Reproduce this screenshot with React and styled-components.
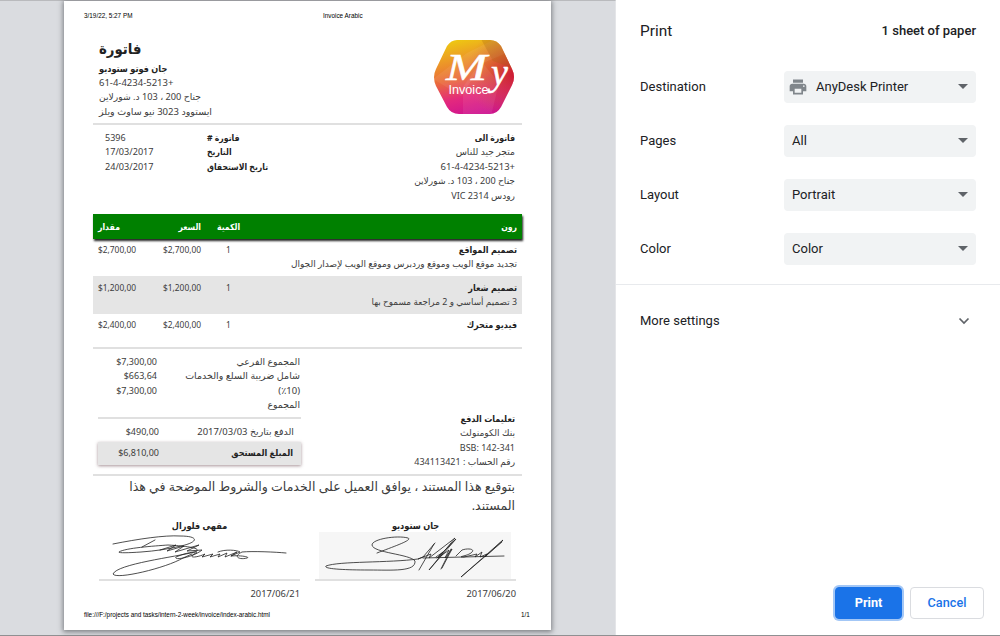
import React from "react";
import styled, { createGlobalStyle } from "styled-components";

const Global = createGlobalStyle`
  * { box-sizing: border-box; }
  html, body { margin: 0; padding: 0; }
  body { font-family: Roboto, "Liberation Sans", sans-serif; font-size: 13px; color: #202124; overflow: hidden; }
`;

const Dialog = styled.div`
  display: flex;
  width: 1000px;
  height: 636px;
  background: #fff;
  border-bottom: 1px solid #8f9092;
`;

const Preview = styled.main`
  width: 616px;
  height: 635px;
  padding: 0 0 0 64px;
  background: #dadce0;
  border-top: 1px solid #b9babd;
  border-right: 1px solid #e4e5e8;
`;

const Sheet = styled.article`
  width: 487px;
  height: 629px;
  display: flex;
  flex-direction: column;
  background: #fff;
  box-shadow: 0 1px 5px 1px rgba(60, 64, 67, 0.6);
  font-family: "Noto Sans", "DejaVu Sans", sans-serif;
  color: #3c3c3c;
`;

const PageMeta = styled.div`
  display: grid;
  grid-template-columns: ${(p) => p.$columns};
  height: ${(p) => p.$height}px;
  padding: ${(p) => p.$top}px 21px 0 20px;
  font: 6.37px/10px "Liberation Sans", sans-serif;
  color: #000;
`;

const Rule = styled.div`
  flex: none;
  height: 2px;
  margin: 0 ${(p) => p.$inset ?? 29}px;
  background: #e0e0e0;
`;

const Line = styled.div`
  height: ${(p) => p.$h ?? 14.4}px;
  line-height: ${(p) => p.$h ?? 14.4}px;
  font-family: "Noto Sans", ${(p) => (p.$bold ? '"DejaVu Sans Condensed", ' : "")}"DejaVu Sans", sans-serif;
  font-size: ${(p) => p.$size ?? 9}px;
  font-weight: ${(p) => (p.$bold ? 700 : 400)};
  color: ${(p) => (p.$bold ? "#222" : "inherit")};
  text-align: ${(p) => p.$align ?? "right"};
  white-space: nowrap;
`;

const Masthead = styled.header`
  display: flex;
  justify-content: space-between;
  height: 97px;
  padding: 11px 36px 0 35px;
`;

const Logo = styled.svg`
  width: 82px;
  height: 77px;
  margin-top: 2px;
`;

const Info = styled.section`
  display: grid;
  grid-template-columns: 102px 120px 1fr;
  height: 89px;
  padding: 6px 36px 0 41px;
`;

const Table = styled.section`
  margin: 0 29px;
  height: 133px;
`;

const Row = styled.div`
  display: grid;
  grid-template-columns: 43px 60px 55px 1fr;
  height: ${(p) => p.$height}px;
  padding: ${(p) => p.$top}px 5px 0 5px;
  background: ${(p) => (p.$shaded ? "#e5e5e5" : "transparent")};
`;

const HeadRow = styled(Row)`
  background: #008000;
  box-shadow: 1px 2px 2px #222;
  color: #fff;
  ${Line} { color: #fff; }
`;

const Summary = styled.section`
  display: flex;
  justify-content: space-between;
  height: 125px;
  padding: 0 36px 0 34px;
`;

const Totals = styled.div`
  width: 203px;
  padding-top: 6px;
`;

const Total = styled.div`
  display: grid;
  grid-template-columns: ${(p) => p.$left ?? 59}px 1fr;
  height: ${(p) => p.$height ?? 14.4}px;
  padding-right: ${(p) => p.$right ?? 1}px;
`;

const AmountDue = styled(Total)`
  padding-top: 4px;
  background: #e5e5e5;
  box-shadow: 0 1px 3px rgba(80, 40, 50, 0.5);
`;

const Payment = styled.div`
  padding-top: 63px;
`;

const Terms = styled.section`
  height: 43px;
  padding: 1px 36px 0 0;
`;

const Signatures = styled.section`
  display: grid;
  grid-template-columns: 201px 201px;
  column-gap: 15px;
  padding-left: 35px;
  height: 82px;
`;

const Scribble = styled.svg`
  display: block;
  width: 192px;
  height: 47px;
  margin-left: 4px;
  background: ${(p) => (p.$paper ? "#f6f6f6" : "transparent")};
  fill: none;
  stroke: #222;
  stroke-width: 0.8;
  stroke-linecap: round;
`;

const Panel = styled.aside`
  flex: 1;
  display: flex;
  flex-direction: column;
`;

const PanelHead = styled.div`
  display: flex;
  align-items: center;
  justify-content: space-between;
  height: 60px;
  padding: 2px 24px 0;
  h1 { margin: 0; font-size: 15.4px; font-weight: 400; }
  span { margin-bottom: 2px; font-weight: 500; }
`;

const Settings = styled.div`
  display: flex;
  flex-direction: column;
  height: 225px;
  border-bottom: 1px solid #e8eaed;
`;

const Setting = styled.label`
  display: grid;
  grid-template-columns: 144px 192px;
  align-items: center;
  height: 54px;
  padding: 0 24px;
  > span { margin-bottom: 2px; }
`;

const Select = styled.div`
  display: flex;
  align-items: center;
  height: 32px;
  padding: 0 8px 2px ${(p) => (p.$icon ? 4 : 8)}px;
  background: #f1f3f4;
  border-radius: 4px;
  span { flex: 1; }
`;

const PrinterIcon = styled.svg`
  width: 20px;
  height: 20px;
  margin: 1px 8px 0 0;
  fill: #80868b;
`;

const Arrow = styled.svg`
  width: 10px;
  height: 5px;
  fill: #5f6368;
`;

const More = styled.div`
  display: flex;
  align-items: center;
  justify-content: space-between;
  height: 72px;
  padding: 0 30px 0 24px;
  span { margin-bottom: 2px; }
`;

const Actions = styled.footer`
  display: flex;
  justify-content: flex-end;
  gap: 8px;
  margin-top: auto;
  padding: 0 16px 16px 0;
`;

const Button = styled.button`
  width: ${(p) => (p.$primary ? 67 : 74)}px;
  height: 32px;
  padding: 0 0 2px;
  border: 1px solid ${(p) => (p.$primary ? "#1a73e8" : "#dadce0")};
  border-radius: 4px;
  background: ${(p) => (p.$primary ? "#1a73e8" : "#fff")};
  color: ${(p) => (p.$primary ? "#fff" : "#1a73e8")};
  box-shadow: ${(p) => (p.$primary ? "0 0 0 2px #a3c7f6" : "none")};
  font: ${(p) => (p.$primary ? 700 : 500)} 12.7px Roboto, sans-serif;
`;

function InvoiceLogo() {
  return (
    <Logo viewBox="0 0 82 77">
      <defs>
        <linearGradient id="base" x1="0.25" y1="0" x2="0.5" y2="1">
          <stop offset="0" stopColor="#eecb10" />
          <stop offset="0.5" stopColor="#ea6a3c" />
          <stop offset="0.75" stopColor="#e3287e" />
          <stop offset="1" stopColor="#cd1290" />
        </linearGradient>
        <radialGradient id="side" cx="1" cy="0.45" r="0.6">
          <stop offset="0" stopColor="#c8102e" stopOpacity="0.9" />
          <stop offset="1" stopColor="#c8602e" stopOpacity="0" />
        </radialGradient>
        <clipPath id="hex">
          <path d="M24 1H57Q64 1 68 7L79 30Q83 38 79 46L68 68Q64 75 57 75H26Q18 75 14 68L3 47Q-1 38 3 30L14 7Q18 1 24 1Z" />
        </clipPath>
      </defs>
      <g clipPath="url(#hex)">
        <path d="M0 0H82V77H0Z" fill="url(#base)" />
        <path d="M0 0H82V77H0Z" fill="url(#side)" />
        <path d="M0 40L34 14 62 0 78 12 50 24 28 57Z" fill="#fff" opacity="0.07" />
        <path d="M30 77V48L48 22 66 44 58 77Z" fill="#fff" opacity="0.07" />
        <path d="M48 0H82V30L60 22Z" fill="#a06010" opacity="0.25" />
      </g>
      <g fill="#fff">
        <text x="13" y="41" fontFamily="Liberation Serif, serif" fontStyle="italic" fontSize="37" stroke="#fff" strokeWidth="0.5" textLength="41" lengthAdjust="spacingAndGlyphs">M</text>
        <text x="58" y="46" fontFamily="Liberation Serif, serif" fontStyle="italic" fontSize="38" stroke="#fff" strokeWidth="0.5">y</text>
        <text x="15.5" y="54.5" fontFamily="Liberation Sans, sans-serif" fontSize="12" textLength="40" lengthAdjust="spacingAndGlyphs">Invoice</text>
      </g>
    </Logo>
  );
}

const DropArrow = () => (
  <Arrow viewBox="0 0 10 5"><path d="M0 0H10L5 5Z" /></Arrow>
);

const settings = [
  { label: "Destination", value: "AnyDesk Printer", icon: true },
  { label: "Pages", value: "All" },
  { label: "Layout", value: "Portrait" },
  { label: "Color", value: "Color" },
];

export default function App() {
  return (
    <>
      <Global />
      <Dialog>
        <Preview>
          <Sheet>
            <PageMeta $columns="239px 1fr" $height={25} $top={10}>
              <span>3/19/22, 5:27 PM</span>
              <span>Invoice Arabic</span>
            </PageMeta>
            <Masthead>
              <div dir="rtl">
                <Line $align="left" $h={22} $size={14.8} $bold>فاتورة</Line>
                <Line $align="left" $h={19} $size={9.1} $bold>جان فوتو ستوديو</Line>
                <Line $align="left" $h={10} $size={9.5}>+61-4-4234-5213</Line>
                <Line $align="left" $h={18} $size={9.2}>جناح 200 ، 103 د. شورلاين</Line>
                <Line $align="left" $h={12} $size={9.55}>ايستوود 3023 نيو ساوث ويلز</Line>
              </div>
              <InvoiceLogo />
            </Masthead>
            <Rule />
            <Info>
              <div>
                <Line $align="left">5396</Line>
                <Line $align="left" $size={9.15}>17/03/2017</Line>
                <Line $align="left" $size={9.15}>24/03/2017</Line>
              </div>
              <div dir="rtl">
                <Line $align="left" $size={8.6} $bold>فاتورة #</Line>
                <Line $align="left" $size={8.6} $bold>التاريخ</Line>
                <Line $align="left" $size={8.6} $bold>تاريخ الاستحقاق</Line>
              </div>
              <div dir="rtl">
                <Line $size={8.6} $bold>فاتورة الى</Line>
                <Line $size={9.2}>متجر جيد للناس</Line>
                <Line $size={9.5}>+61-4-4234-5213</Line>
                <Line $size={9.1}>جناح 200 ، 103 د. شورلاين</Line>
                <Line $size={9.1}>رودس VIC 2314</Line>
              </div>
            </Info>
            <Table>
              <HeadRow $height={25} $top={6}>
                <Line $align="left" $size={8.6} $bold>مقدار</Line>
                <Line $size={8.6} $bold>السعر</Line>
                <Line $align="center" $size={8.6} $bold>الكمية</Line>
                <Line $size={8.6} $bold>رون</Line>
              </HeadRow>
              <Row $height={37} $top={4}>
                <Line $align="left" $size={8.4}>$2,700,00</Line>
                <Line $size={8.4}>$2,700,00</Line>
                <Line $align="center" $size={8.4}>1</Line>
                <div dir="rtl">
                  <Line $size={9} $bold>تصميم المواقع</Line>
                  <Line $h={13}>تجديد موقع الويب وموقع وردبرس وموقع الويب لإصدار الجوال</Line>
                </div>
              </Row>
              <Row $height={38} $top={5} $shaded>
                <Line $align="left" $size={8.4}>$1,200,00</Line>
                <Line $size={8.4}>$1,200,00</Line>
                <Line $align="center" $size={8.4}>1</Line>
                <div dir="rtl">
                  <Line $bold>تصميم شعار</Line>
                  <Line $size={8.85}>3 تصميم أساسي و 2 مراجعة مسموح بها</Line>
                </div>
              </Row>
              <Row $height={33} $top={4}>
                <Line $align="left" $size={8.4}>$2,400,00</Line>
                <Line $size={8.4}>$2,400,00</Line>
                <Line $align="center" $size={8.4}>1</Line>
                <Line $bold dir="rtl">فيديو متحرك</Line>
              </Row>
            </Table>
            <Rule />
            <Summary>
              <Totals>
                <Total><Line>$7,300,00</Line><Line $size={9.3}>المجموع الفرعي</Line></Total>
                <Total><Line>$663,64</Line><Line $size={9.5}>شامل ضريبة السلع والخدمات</Line></Total>
                <Total><Line>$7,300,00</Line><Line $size={9.5}>(٪10)</Line></Total>
                <Total $height={18.8}><span /><Line $size={9.3}>المجموع</Line></Total>
                <Rule $inset={0} />
                <Total $left={61} $height={23} $right={7}>
                  <Line $h={25}>$490,00</Line>
                  <Line $h={25} $size={9.45} dir="rtl">الدفع بتاريخ 2017/03/03</Line>
                </Total>
                <AmountDue $left={61} $height={23} $right={8}>
                  <Line>$6,810,00</Line>
                  <Line $bold>المبلغ المستحق</Line>
                </AmountDue>
              </Totals>
              <Payment dir="rtl">
                <Line $bold>تعليمات الدفع</Line>
                <Line $size={9.2}>بنك الكومنولث</Line>
                <Line>BSB: 142-341</Line>
                <Line>رقم الحساب : 434113421</Line>
              </Payment>
            </Summary>
            <Rule />
            <Terms dir="rtl">
              <Line $h={19} $size={12.55}>بتوقيع هذا المستند ، يوافق العميل على الخدمات والشروط الموضحة في هذا</Line>
              <Line $h={19} $size={12.55}>المستند.</Line>
            </Terms>
            <Signatures>
              <div>
                <Line $align="center" $h={13} $size={9.1} $bold>مقهى فلورال</Line>
                <Scribble viewBox="0 0 192 47">
                  <path d="M10 12C35 7 62 3 77 4C96 4 96 10 78 14C66 17 52 19 38 20C24 21 15 21 16 20C22 16 51 14 65 13C82 14 101 16 92 20C72 25 14 32 10 42C13 48 63 36 80 26L89 22" />
                  <path d="M39 15L52 8M57 18L73 13 64 19 81 14 72 20 96 13 84 19 99 18C91 25 70 29 73 25C84 20 101 18 91 22C85 26 93 26 102 22L99 25 110 22 107 25 117 22 115 25 124 21 122 25 134 20 128 24" />
                  <path d="M115 20C122 17 134 18 137 20L128 24C136 23 148 25 144 26C137 28 129 25 139 20C150 19 172 20 183 21" />
                </Scribble>
                <Rule $inset={0} />
                <Line $h={26} $size={9.3}>2017/06/21</Line>
              </div>
              <div>
                <Line $align="center" $h={13} $size={9.1} $bold>جان ستوديو</Line>
                <Scribble viewBox="0 0 192 47" $paper>
                  <path d="M58 21C76 14 94 8 89 6C78 3 53 7 53 13C54 21 91 22 96 29C97 40 73 38 50 38C26 38 4 37 7 34C20 29 70 31 99 27" />
                  <path d="M115 12L100 38M116 11L104 25 99 27 112 22 110 26 136 6 110 38 137 7 118 26M117 25L124 20 119 26 130 18 126 26 133 17 123 36M132 17L122 37" />
                  <path d="M137 24L143 18C149 16 156 17 153 20C150 24 136 25 145 25L158 22 156 25 163 20 161 25 168 22 166 25 184 8 142 45 183 10M104 26L185 24" />
                </Scribble>
                <Rule $inset={0} />
                <Line $h={26} $size={9.3}>2017/06/20</Line>
              </div>
            </Signatures>
            <PageMeta $columns="437px 1fr" $height={20} $top={9}>
              <span>file:///F:/projects and tasks/intern-2-week/invoice/index-arabic.html</span>
              <span>1/1</span>
            </PageMeta>
          </Sheet>
        </Preview>
        <Panel>
          <PanelHead><h1>Print</h1><span>1 sheet of paper</span></PanelHead>
          <Settings>
            {settings.map((s) => (
              <Setting key={s.label}>
                <span>{s.label}</span>
                <Select $icon={s.icon}>
                  {s.icon && (
                    <PrinterIcon viewBox="0 0 24 24">
                      <path d="M19 8H5c-1.66 0-3 1.34-3 3v6h4v4h12v-4h4v-6c0-1.66-1.34-3-3-3zm-3 11H8v-5h8v5zm3-7c-.55 0-1-.45-1-1s.45-1 1-1 1 .45 1 1-.45 1-1 1zm-1-9H6v4h12V3z" />
                    </PrinterIcon>
                  )}
                  <span>{s.value}</span>
                  <DropArrow />
                </Select>
              </Setting>
            ))}
          </Settings>
          <More>
            <span>More settings</span>
            <svg width="12" height="8" viewBox="0 0 12 8" fill="none" stroke="#5f6368" strokeWidth="1.7"><path d="M1.5 1.5L6 6L10.5 1.5" /></svg>
          </More>
          <Actions>
            <Button $primary>Print</Button>
            <Button>Cancel</Button>
          </Actions>
        </Panel>
      </Dialog>
    </>
  );
}
